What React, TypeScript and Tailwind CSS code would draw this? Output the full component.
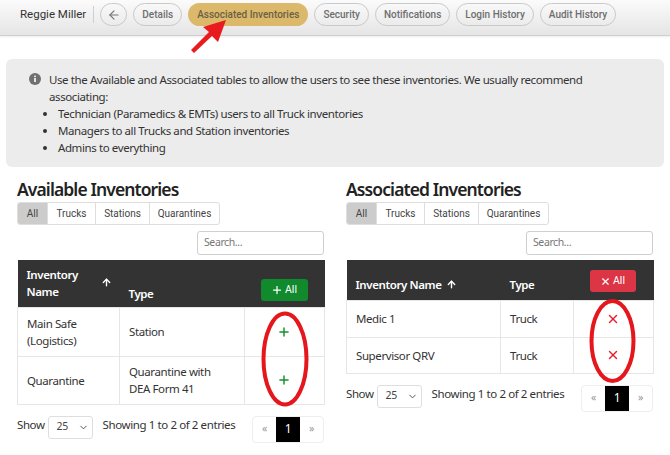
import { ArrowLeft, ArrowUp, Plus, X, ChevronDown } from "lucide-react";

const body = "font-['Noto_Sans','Open_Sans',sans-serif] tracking-[-0.4px]";
const roboto = "font-['Roboto',sans-serif] tracking-normal";

function Pill({ label, active }: { label: string; active?: boolean }) {
  return (
    <div
      className={`h-[23px] shrink-0 whitespace-nowrap flex items-center rounded-full text-[10px] font-medium ${
        active ? "bg-[#dcb96a] text-[#6b5f45] px-[9px]" : "border border-[#c9c9c9] text-[#6e6e6e] px-[8px]"
      }`}
    >
      {label}
    </div>
  );
}

function Filters() {
  const items = ["All", "Trucks", "Stations", "Quarantines"];
  return (
    <div className={`flex w-[203px] h-[23px] rounded-[3px] border border-[#dedede] text-[10px] text-[#444] overflow-hidden ${roboto}`}>
      {items.map((t, i) => (
        <div
          key={t}
          className={`flex items-center justify-center ${i > 0 ? "border-l border-[#dedede]" : ""} ${
            i === 0 ? "bg-[#cccccc] w-[29px]" : i === 1 ? "w-[48px]" : i === 2 ? "w-[54px]" : "flex-1"
          }`}
        >
          {t}
        </div>
      ))}
    </div>
  );
}

function Search() {
  return (
    <div className="flex justify-end mt-[6px]">
      <div className="w-[127px] h-[24px] border border-[#cfcfcf] rounded-[3px] pl-[6px] flex items-center text-[10.5px] text-[#777]">
        Search...
      </div>
    </div>
  );
}

function Footer() {
  return (
    <div className="flex items-start mt-[11px] text-[11.5px] text-[#333]">
      <span className="leading-[18px]">Show</span>
      <div className="ml-[3px] w-[45px] h-[23px] border border-[#dedede] rounded-[3px] flex items-center justify-between pl-[8px] pr-[3px] text-[10.5px] text-[#444]">
        25
        <ChevronDown size={11} strokeWidth={2} className="text-[#444]" />
      </div>
      <span className="ml-[10px] leading-[18px] whitespace-nowrap">Showing 1 to 2 of 2 entries</span>
      <div className="ml-auto flex shrink-0 w-[72px] h-[27px] border border-[#eeeeee] rounded-[4px] text-[10.5px] text-[#999] overflow-hidden">
        <div className="flex-1 flex items-center justify-center">«</div>
        <div className="w-[24px] bg-black text-white flex items-center justify-center text-[12px]">1</div>
        <div className="flex-1 flex items-center justify-center">»</div>
      </div>
    </div>
  );
}

const cell = "border border-[#e6e6e6] text-[11.5px] text-[#333] leading-[17px] pl-[9px] pr-[6px] align-middle";

function LeftTable() {
  return (
    <table className="mt-[5px] w-[307px] table-fixed border-collapse">
      <colgroup>
        <col className="w-[102px]" />
        <col className="w-[125px]" />
        <col className="w-[80px]" />
      </colgroup>
      <thead>
        <tr className="h-[47px] bg-[#333333] text-white text-[11.5px] leading-[17px]">
          <th className="pl-[9px] text-left font-semibold align-middle">
            <div className="flex items-center justify-between pr-[8px]">
              <span>Inventory<br />Name</span>
              <ArrowUp size={11} strokeWidth={3} className="mb-[2px]" />
            </div>
          </th>
          <th className="pl-[9px] text-left font-semibold align-bottom pb-[5px]">Type</th>
          <th className="align-bottom pb-[6px]">
            <div className={`ml-[16px] w-[47px] h-[22px] rounded-[3px] bg-[#108a2c] flex items-center justify-center gap-[2px] text-[10.5px] font-normal ${roboto}`}>
              <Plus size={12} strokeWidth={2.5} />All
            </div>
          </th>
        </tr>
      </thead>
      <tbody>
        <tr className="h-[49px]">
          <td className={cell}>Main Safe (Logistics)</td>
          <td className={cell}>Station</td>
          <td className={cell}><Plus size={14} strokeWidth={2.5} className="mx-auto text-[#17912f] -translate-x-[2px]" /></td>
        </tr>
        <tr className="h-[48px]">
          <td className={cell}>Quarantine</td>
          <td className={cell}>Quarantine with<br />DEA Form 41</td>
          <td className={cell}><Plus size={14} strokeWidth={2.5} className="mx-auto text-[#17912f] -translate-x-[2px]" /></td>
        </tr>
      </tbody>
    </table>
  );
}

function RightTable() {
  return (
    <table className="mt-[5px] w-[307px] table-fixed border-collapse">
      <colgroup>
        <col className="w-[154px]" />
        <col className="w-[73px]" />
        <col className="w-[80px]" />
      </colgroup>
      <thead>
        <tr className="h-[40px] bg-[#333333] text-white text-[11.5px]">
          <th className="pl-[9px] text-left font-semibold align-bottom pb-[6px]">
            <span className="inline-flex items-center gap-[4px]">Inventory Name <ArrowUp size={11} strokeWidth={3} /></span>
          </th>
          <th className="pl-[9px] text-left font-semibold align-bottom pb-[6px]">Type</th>
          <th className="align-top pt-[10px]">
            <div className={`ml-[16px] w-[46px] h-[22px] rounded-[3px] bg-[#dc3545] flex items-center justify-center gap-[2px] text-[10.5px] font-normal ${roboto}`}>
              <X size={11} strokeWidth={2.5} />All
            </div>
          </th>
        </tr>
      </thead>
      <tbody>
        <tr className="h-[37px]">
          <td className={cell}>Medic 1</td>
          <td className={cell}>Truck</td>
          <td className={cell}><X size={14} strokeWidth={2.5} className="mx-auto text-[#e0202e] -translate-x-[2px]" /></td>
        </tr>
        <tr className="h-[36px]">
          <td className={cell}>Supervisor QRV</td>
          <td className={cell}>Truck</td>
          <td className={cell}><X size={14} strokeWidth={2.5} className="mx-auto text-[#e0202e] -translate-x-[2px]" /></td>
        </tr>
      </tbody>
    </table>
  );
}

export default function App() {
  return (
    <div className={`relative w-[670px] h-[455px] overflow-hidden bg-white ${body}`}>
      <div className={`h-[36px] flex items-start pt-[3px] pl-[20px] gap-[6px] bg-gradient-to-b from-[#fbfbfb] to-[#e5e5e5] border-b border-[#cfcfcf] shadow-[0_1px_2px_rgba(0,0,0,0.08)] ${roboto}`}>
        <div className="h-[23px] flex items-center text-[11.5px] text-[#333] shrink-0 whitespace-nowrap">
          Reggie Miller
          <span className="ml-[7px] w-px h-[17px] bg-[#cfcfcf]" />
        </div>
        <div className="w-[27px] h-[23px] shrink-0 rounded-full border border-[#c9c9c9] flex items-center justify-center text-[#777]">
          <ArrowLeft size={14} strokeWidth={2} />
        </div>
        <Pill label="Details" />
        <Pill label="Associated Inventories" active />
        <Pill label="Security" />
        <Pill label="Notifications" />
        <Pill label="Login History" />
        <Pill label="Audit History" />
      </div>

      <div className="mt-[23px] mx-[6px] h-[108px] rounded-[6px] bg-[#ececec] flex pt-[12px] pl-[23px] pr-[40px] text-[11.5px] leading-[17px] text-[#333]">
        <svg width="12" height="12" viewBox="0 0 12 12" className="mt-[2px] shrink-0">
          <circle cx="6" cy="6" r="6" fill="#707070" />
          <rect x="5.2" y="5" width="1.6" height="4" fill="#fff" />
          <rect x="5.2" y="2.6" width="1.6" height="1.5" fill="#fff" />
        </svg>
        <div className="ml-[8px]">
          <p>Use the Available and Associated tables to allow the users to see these inventories. We usually recommend associating:</p>
          <ul className="list-disc pl-[9px]">
            <li>Technician (Paramedics &amp; EMTs) users to all Truck inventories</li>
            <li>Managers to all Trucks and Station inventories</li>
            <li>Admins to everything</li>
          </ul>
        </div>
      </div>

      <div className="mt-[10px] mx-[17px] grid grid-cols-[307px_307px] gap-x-[22px] items-start">
        <section>
          <h2 className="text-[17.5px] font-semibold tracking-[-0.9px] leading-[25px] text-[#222]">Available Inventories</h2>
          <Filters />
          <Search />
          <LeftTable />
          <Footer />
        </section>
        <section>
          <h2 className="text-[17.5px] font-semibold tracking-[-0.9px] leading-[25px] text-[#222]">Associated Inventories</h2>
          <Filters />
          <Search />
          <RightTable />
          <Footer />
        </section>
      </div>

      <svg className="absolute inset-0 pointer-events-none" width="670" height="455" viewBox="0 0 670 455" fill="none">
        <ellipse cx="285" cy="359" rx="21.5" ry="45.5" stroke="#e5161c" strokeWidth="4" />
        <ellipse cx="612.5" cy="341" rx="21" ry="40" stroke="#e5161c" strokeWidth="4" />
        <polygon points="226,20 218,42 212,36 194,53 191,50 209,32 203,27" fill="#e81c1f" />
      </svg>
    </div>
  );
}
